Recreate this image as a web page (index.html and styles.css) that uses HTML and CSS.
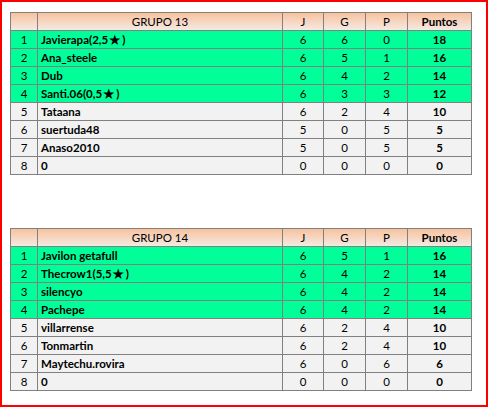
FILE: index.html
```html
<!DOCTYPE html>
<html>
<head>
<meta charset="utf-8">
<link rel="stylesheet" href="styles.css">
</head>
<body>
<div class="frame">
  <table class="grupo">
    <colgroup><col class="c-pos"><col class="c-name"><col class="c-n"><col class="c-n2"><col class="c-n2"><col class="c-pts"></colgroup>
    <thead>
      <tr class="head"><th></th><th class="title">GRUPO 13</th><th>J</th><th>G</th><th>P</th><th class="b">Puntos</th></tr>
    </thead>
    <tbody>
      <tr class="up"><td class="pos">1</td><td class="name">Javierapa(2,5<span class="star">★</span>)</td><td>6</td><td>6</td><td>0</td><td class="b">18</td></tr>
      <tr class="up"><td class="pos">2</td><td class="name">Ana_steele</td><td>6</td><td>5</td><td>1</td><td class="b">16</td></tr>
      <tr class="up"><td class="pos">3</td><td class="name">Dub</td><td>6</td><td>4</td><td>2</td><td class="b">14</td></tr>
      <tr class="up"><td class="pos">4</td><td class="name">Santi.06(0,5<span class="star">★</span>)</td><td>6</td><td>3</td><td>3</td><td class="b">12</td></tr>
      <tr><td class="pos">5</td><td class="name">Tataana</td><td>6</td><td>2</td><td>4</td><td class="b">10</td></tr>
      <tr><td class="pos">6</td><td class="name">suertuda48</td><td>5</td><td>0</td><td>5</td><td class="b">5</td></tr>
      <tr><td class="pos">7</td><td class="name">Anaso2010</td><td>5</td><td>0</td><td>5</td><td class="b">5</td></tr>
      <tr><td class="pos">8</td><td class="name">0</td><td>0</td><td>0</td><td>0</td><td class="b">0</td></tr>
    </tbody>
  </table>
  <table class="grupo second">
    <colgroup><col class="c-pos"><col class="c-name"><col class="c-n"><col class="c-n2"><col class="c-n2"><col class="c-pts"></colgroup>
    <thead>
      <tr class="head"><th></th><th class="title">GRUPO 14</th><th>J</th><th>G</th><th>P</th><th class="b">Puntos</th></tr>
    </thead>
    <tbody>
      <tr class="up"><td class="pos">1</td><td class="name">Javilon getafull</td><td>6</td><td>5</td><td>1</td><td class="b">16</td></tr>
      <tr class="up"><td class="pos">2</td><td class="name">Thecrow1(5,5<span class="star">★</span>)</td><td>6</td><td>4</td><td>2</td><td class="b">14</td></tr>
      <tr class="up"><td class="pos">3</td><td class="name">silencyo</td><td>6</td><td>4</td><td>2</td><td class="b">14</td></tr>
      <tr class="up"><td class="pos">4</td><td class="name">Pachepe</td><td>6</td><td>4</td><td>2</td><td class="b">14</td></tr>
      <tr><td class="pos">5</td><td class="name">villarrense</td><td>6</td><td>2</td><td>4</td><td class="b">10</td></tr>
      <tr><td class="pos">6</td><td class="name">Tonmartin</td><td>6</td><td>2</td><td>4</td><td class="b">10</td></tr>
      <tr><td class="pos">7</td><td class="name">Maytechu.rovira</td><td>6</td><td>0</td><td>6</td><td class="b">6</td></tr>
      <tr><td class="pos">8</td><td class="name">0</td><td>0</td><td>0</td><td>0</td><td class="b">0</td></tr>
    </tbody>
  </table>
</div>
</body>
</html>
```

FILE: styles.css
```css
html, body {
  margin: 0;
  padding: 0;
  background: #ffffff;
}
.frame {
  box-sizing: border-box;
  width: 488px;
  height: 407px;
  border: 2px solid #ff0000;
  padding: 10px 0 0 8px;
  font-family: Lato, "Liberation Sans", sans-serif;
  font-size: 11.5px;
  color: #000000;
}
.grupo {
  border-collapse: collapse;
  table-layout: fixed;
  width: 462px;
}
.second {
  margin-top: 53px;
}
.c-pos { width: 27px; }
.c-name { width: 245px; }
.c-n { width: 41px; }
.c-n2 { width: 42px; }
.c-pts { width: 64px; }
.grupo th, .grupo td {
  border: 1px solid #808080;
  padding: 0;
  height: 17px;
  line-height: 17px;
  text-align: center;
  font-weight: normal;
  white-space: nowrap;
  overflow: hidden;
}
.grupo tr {
  height: 18px;
  background: #f2f2f2;
}
.grupo tr.head {
  background: linear-gradient(#f8c29e, #f4ece7);
}
.grupo tr.up {
  background: #00ff99;
}
.grupo td.name {
  text-align: left;
  padding-left: 3px;
  font-weight: bold;
}
.grupo .b {
  font-weight: bold;
}
.star {
  font-family: "DejaVu Sans", sans-serif;
  font-size: 14.5px;
  line-height: 0;
  vertical-align: -1px;
  margin-right: 1px;
}
```
